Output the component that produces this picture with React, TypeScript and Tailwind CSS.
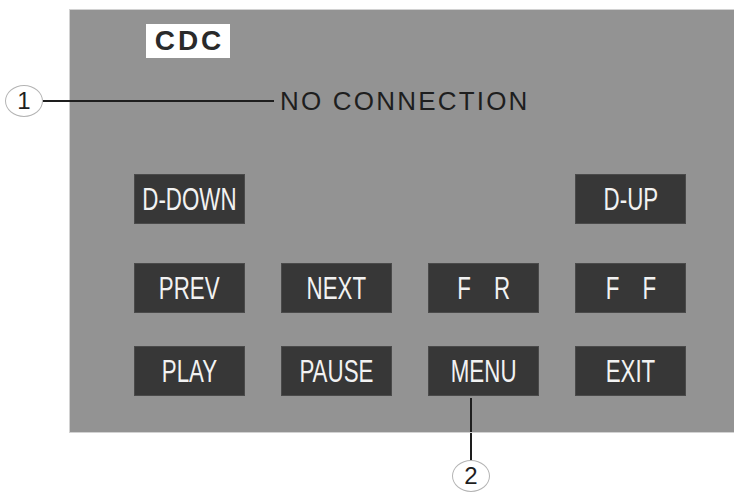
import React, { FC } from 'react';

type Key = { label: string[]; col?: string };

const keyRows: Key[][] = [
  [{ label: ['D-DOWN'] }, { label: ['D-UP'], col: 'col-start-4' }],
  [{ label: ['PREV'] }, { label: ['NEXT'] }, { label: ['F', 'R'] }, { label: ['F', 'F'] }],
  [{ label: ['PLAY'] }, { label: ['PAUSE'] }, { label: ['MENU'] }, { label: ['EXIT'] }],
];

const rowMargins = ['mt-[57px]', 'mt-[39px]', 'mt-[33px]'];

const KeyButton: FC<Key> = ({ label, col }) => (
  <div
    className={`${col ?? ''} flex h-[50px] w-[111px] items-center justify-center border border-[#4a4a4a] bg-[#373737]`}
  >
    <span className="flex scale-x-[0.72] gap-[32px] whitespace-nowrap text-[31px] leading-none text-[#f2f2f2]">
      {label.map((part, i) => (
        <span key={i}>{part}</span>
      ))}
    </span>
  </div>
);

const Callout: FC<{ n: string }> = ({ n }) => (
  <div className="flex h-[32px] w-[38px] shrink-0 items-center justify-center rounded-[50%] border border-[#b4b4b4] bg-white text-[24px] leading-none text-[#1e1e1e]">
    {n}
  </div>
);

const App: FC = () => (
  <div className="h-[493px] w-[734px] overflow-hidden bg-white pt-[9px] font-['Liberation_Sans',Arial,sans-serif]">
    {/* cdc screen */}
    <div className="ml-[69px] border-y border-l border-[#d2d2d2] bg-[#939393] pl-[64px]">
      <div className="ml-[12px] mt-[14px] flex h-[34px] w-[84px] items-center justify-center bg-white pl-[3px] text-[28px] font-bold leading-none tracking-[3px] text-[#2a2a2a]">
        CDC
      </div>

      <div className="-ml-[129px] mt-[27px] flex items-center">
        <Callout n="1" />
        <div className="h-[1.5px] w-[231px] bg-[#1e1e1e]" />
        <span className="ml-[6px] text-[26px] leading-none tracking-[2.2px] text-[#1e1e1e]">
          NO CONNECTION
        </span>
      </div>

      {keyRows.map((row, i) => (
        <div
          key={i}
          className={`${rowMargins[i]} grid grid-cols-[111px_111px_111px_111px] gap-x-[36px]`}
        >
          {row.map((k) => (
            <KeyButton key={k.label.join('')} label={k.label} col={k.col} />
          ))}
        </div>
      ))}

      <div className="grid grid-cols-[111px_111px_111px_111px] gap-x-[36px]">
        <div className="col-start-3 ml-[42px] mt-[2px] h-[34px] w-[1.5px] bg-[#1e1e1e]" />
      </div>
    </div>

    {/* callout 2 below menu */}
    <div className="ml-[452px] flex w-[38px] flex-col items-center">
      <div className="h-[27px] w-[1.5px] bg-[#1e1e1e]" />
      <Callout n="2" />
    </div>
  </div>
);

export default App;
